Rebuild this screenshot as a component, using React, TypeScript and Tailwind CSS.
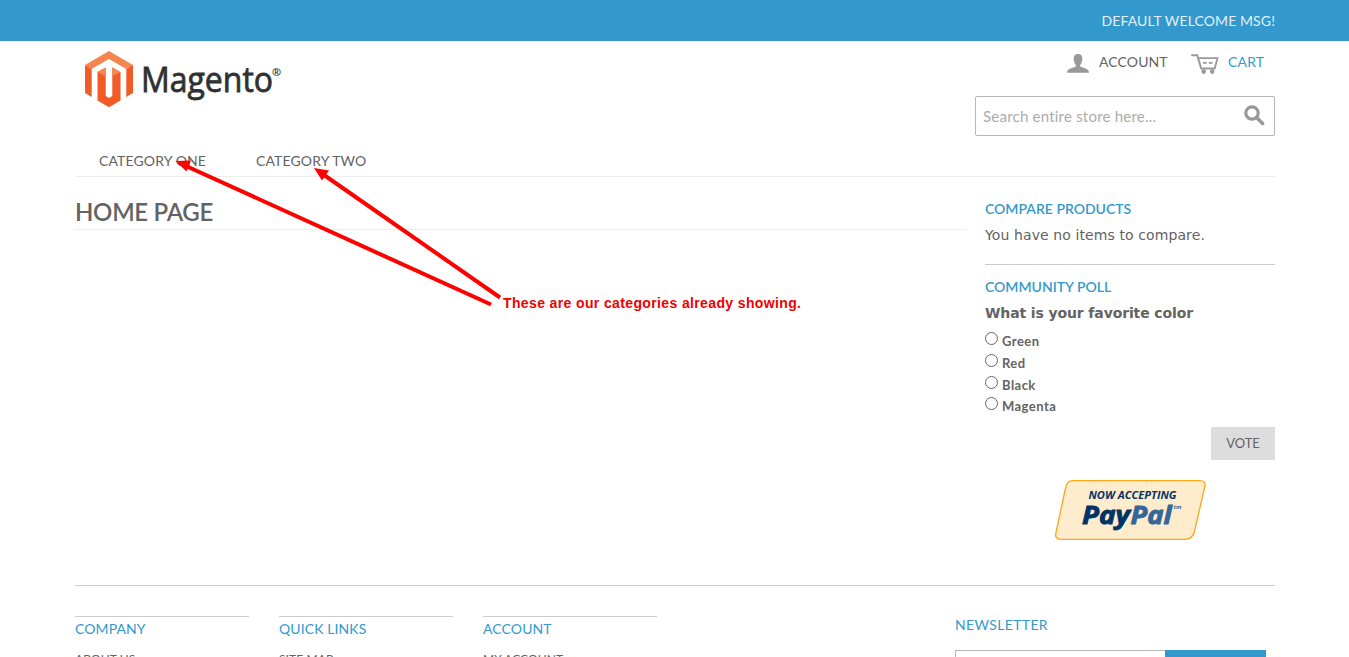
import type { ReactNode } from "react";

const footerColumns = [
  { title: "Company", link: "About us" },
  { title: "Quick links", link: "Site map" },
  { title: "Account", link: "My account" }
];

const pollOptions = ["Green", "Red", "Black", "Magenta"];

function MagentoLogo() {
  return (
    <svg width="200" height="60" viewBox="0 0 200 60" className="block" role="img" aria-label="Magento">
      <path d="M0 14 24 0 48 14 41.3 18 24 8 6.700 18Z" fill="#f6864f" />
      <path d="M0 14 6.700 18V46L0 42Z" fill="#f15b25" />
      <path d="M48 14 41.300 18V46L48 42Z" fill="#f15b25" />
      <path d="M12.500 21 20.700 16.500V45L24 47 27.300 45V16.500L35.500 21V49.500L24 56.200 12.500 49.500Z" fill="#f15b25" />
      <path d="M12.500 21 20.700 16.500V25.500Z" fill="#f6864f" />
      <path d="M35.500 21 27.300 16.500V25.500Z" fill="#f6864f" />
      <text
        x="56"
        y="41.300"
        textLength="132"
        lengthAdjust="spacingAndGlyphs"
        fill="#303132"
        stroke="#303132"
        strokeWidth="0.800"
        fontFamily="Open Sans, sans-serif"
        fontSize="35"
      >
        Magento
      </text>
      <text x="187" y="25" fill="#303132" fontFamily="Open Sans, sans-serif" fontWeight="700" fontSize="11">
        ®
      </text>
    </svg>
  );
}

function AccountIcon() {
  return (
    <svg width="22" height="19" viewBox="0 0 22 19" fill="#999" className="block">
      <path d="M11 0C8 0 6.700 1.800 6.700 4.600c0 3 .9 5.100 2.100 6.500v1.700C6 13.700 0 14.500 0 18.700h22c0-4.200-6-5-8.800-5.900v-1.700c1.200-1.400 2.100-3.500 2.100-6.500C15.300 1.800 14 0 11 0Z" />
    </svg>
  );
}

function CartIcon() {
  return (
    <svg width="28" height="20" viewBox="0 0 28 20" className="block" fill="none" stroke="#999">
      <path d="M0.200 1.200H6.200L10.200 14.500H24.500" strokeWidth="2" />
      <path d="M7 4.200H26.500L23.800 14" strokeWidth="1.800" />
      <path d="M12 8.900h3.700M17.800 8.900h3.700" strokeWidth="1.900" />
      <circle cx="12.700" cy="17.600" r="2.300" fill="#999" stroke="none" />
      <circle cx="21.200" cy="17.600" r="2.300" fill="#999" stroke="none" />
    </svg>
  );
}

function SearchIcon() {
  return (
    <svg width="21" height="21" viewBox="0 0 21 21" fill="none" stroke="#999" className="block">
      <circle cx="8" cy="8" r="6.200" strokeWidth="3.200" />
      <path d="M12.600 12.600 18.600 18.600" strokeWidth="3.600" strokeLinecap="round" />
    </svg>
  );
}

function PayPalBadge() {
  return (
    <svg width="151" height="60" viewBox="0 0 151 60" className="block">
      <path
        d="M17.500 0.700H145Q151 0.700 149.800 6.500L139.500 51.500Q137.500 59.300 130 59.300H6Q-0.500 59.300 0.900 53L10.500 8Q12 0.700 17.500 0.700Z"
        fill="#ffeccc"
        stroke="#f9a71b"
        strokeWidth="1.300"
      />
      <g fontFamily="Open Sans, sans-serif" fontStyle="italic" fontWeight="700">
        <text x="33.500" y="18.800" fontSize="10.500" fill="#003366" textLength="88" lengthAdjust="spacingAndGlyphs">
          NOW ACCEPTING
        </text>
        <text x="27" y="44" fontSize="25" fill="#003366" stroke="#003366" strokeWidth="0.900" textLength="48" lengthAdjust="spacingAndGlyphs">
          Pay
        </text>
        <text x="75.500" y="44" fontSize="25" fill="#336699" stroke="#336699" strokeWidth="0.900" textLength="41" lengthAdjust="spacingAndGlyphs">
          Pal
        </text>
        <text x="118.500" y="29" fontSize="6" fill="#336699">
          tm
        </text>
      </g>
    </svg>
  );
}

function BlockTitle({ children }: { children: ReactNode }) {
  return <h2 className="text-sm leading-5 font-semibold text-[#3399cc] uppercase">{children}</h2>;
}

function Annotation() {
  return (
    <div className="pointer-events-none absolute inset-0">
      <svg width="1349" height="657" viewBox="0 0 1349 657" className="block" fill="#ff0000" stroke="#ff0000">
        <path d="M491 304.500 186 166" strokeWidth="4" />
        <path d="M175.500 161 191 160.500 186.500 171.500Z" stroke="none" />
        <path d="M500 297.500 324 175" strokeWidth="4" />
        <path d="M314 168 329 170.500 322 180.500Z" stroke="none" />
      </svg>
      <p className="absolute top-[293px] left-[503px] font-['Liberation_Sans',sans-serif] text-sm leading-5 font-bold tracking-[0.37px] whitespace-nowrap text-[#f00000]">
        These are our categories already showing.
      </p>
    </div>
  );
}

export default function App() {
  return (
    <div className="relative h-[657px] w-[1349px] overflow-hidden bg-white px-[75px] font-[Lato,sans-serif] text-[#636363]">
      <div className="-mx-[75px] h-[41px] bg-[#3399cc] px-[75px]">
        <p className="w-[1200px] text-right text-sm leading-[41px] tracking-[0.1px] text-[#e0eff7] uppercase">
          Default welcome msg!
        </p>
      </div>

      <div className="w-[1200px]">
        <header className="flex h-[103px] justify-between">
          <a href="#" className="pt-2.5 pl-2.5">
            <MagentoLogo />
          </a>
          <div className="w-[300px]">
            <div className="flex h-[55px] items-start justify-end pr-2.5 text-sm leading-5 uppercase">
              <a href="#" className="flex pt-[11px]">
                <span className="mt-0.5 mr-2.5">
                  <AccountIcon />
                </span>
                <span className="w-[69px] tracking-[0.1px]">Account</span>
              </a>
              <a href="#" className="ml-[23px] flex pt-[11px] text-[#3399cc]">
                <span className="mt-0.5 mr-[9px]">
                  <CartIcon />
                </span>
                <span className="w-[37px] tracking-[0.2px]">Cart</span>
              </a>
            </div>
            <form className="flex h-10 items-center justify-between rounded-[2px] border border-[#b7b7b7] pr-[9px] pl-[7px]">
              <input
                className="w-56 text-[15px] tracking-[0.22px] outline-none placeholder:text-[#ababab]"
                placeholder="Search entire store here..."
              />
              <button type="button" className="-mt-0.5">
                <SearchIcon />
              </button>
            </form>
          </div>
        </header>

        <nav className="flex h-[33px] gap-[49px] border-b border-[#ededed] pt-[7px] pl-6 text-sm leading-5 tracking-[0.12px] uppercase">
          <a href="#" className="w-[108px] whitespace-nowrap">Category one</a>
          <a href="#" className="whitespace-nowrap">Category two</a>
        </nav>

        <div className="flex h-[408px] justify-between">
          <main className="w-[890px]">
            <h1 className="h-[53px] border-b border-[#ededed] pt-[19px] text-2xl leading-8 font-semibold tracking-[-0.3px] uppercase">
              Home page
            </h1>
          </main>

          <aside className="w-[290px] pt-[22px]">
            <section className="h-[66px] border-b border-[#cccccc]">
              <BlockTitle>Compare products</BlockTitle>
              <p className="mt-1.5 font-['DejaVu_Sans',sans-serif] text-sm leading-5 tracking-[0.1px]">
                You have no items to compare.
              </p>
            </section>
            <section className="pt-3">
              <BlockTitle>Community poll</BlockTitle>
              <p className="mt-1.5 font-['DejaVu_Sans',sans-serif] text-sm leading-5 font-bold tracking-[-0.12px]">
                What is your favorite color
              </p>
              <ul className="mt-[8.400px]">
                {pollOptions.map((option) => (
                  <li key={option} className="h-[21.700px]">
                    <label className="flex items-start text-[13px] leading-5 font-bold tracking-[0.45px]">
                      <input
                        type="radio"
                        name="poll"
                        className="mt-px mr-1 size-[13px] appearance-none rounded-full border border-[#666666] bg-white"
                      />
                      {option}
                    </label>
                  </li>
                ))}
              </ul>
              <div className="mt-[8.800px] flex justify-end">
                <button type="button" className="h-[33px] w-16 bg-[#dddddd] text-[13px] uppercase">
                  Vote
                </button>
              </div>
            </section>
            <a href="#" className="mt-5 flex justify-center">
              <PayPalBadge />
            </a>
          </aside>
        </div>

        <footer className="flex justify-between border-t border-[#cccccc] pt-[30px] text-sm uppercase">
          <div className="flex gap-[30px]">
            {footerColumns.map((column) => (
              <div key={column.title} className="w-[174px] border-t border-[#cccccc] pt-0.5">
                <h6 className="leading-5 tracking-[0.1px] text-[#3399cc]">{column.title}</h6>
                <a href="#" className="mt-2.5 block text-xs leading-5 tracking-[0.1px]">{column.link}</a>
              </div>
            ))}
          </div>
          <div className="-mt-px w-80">
            <h6 className="leading-5 tracking-[0.35px] text-[#3399cc]">Newsletter</h6>
            <div className="mt-[15px] flex">
              <input className="h-[30px] w-[210px] border border-r-0 border-[#b7b7b7]" />
              <button type="button" className="h-[30px] w-[101px] bg-[#3399cc]" aria-label="Subscribe" />
            </div>
          </div>
        </footer>
      </div>

      <Annotation />
    </div>
  );
}
